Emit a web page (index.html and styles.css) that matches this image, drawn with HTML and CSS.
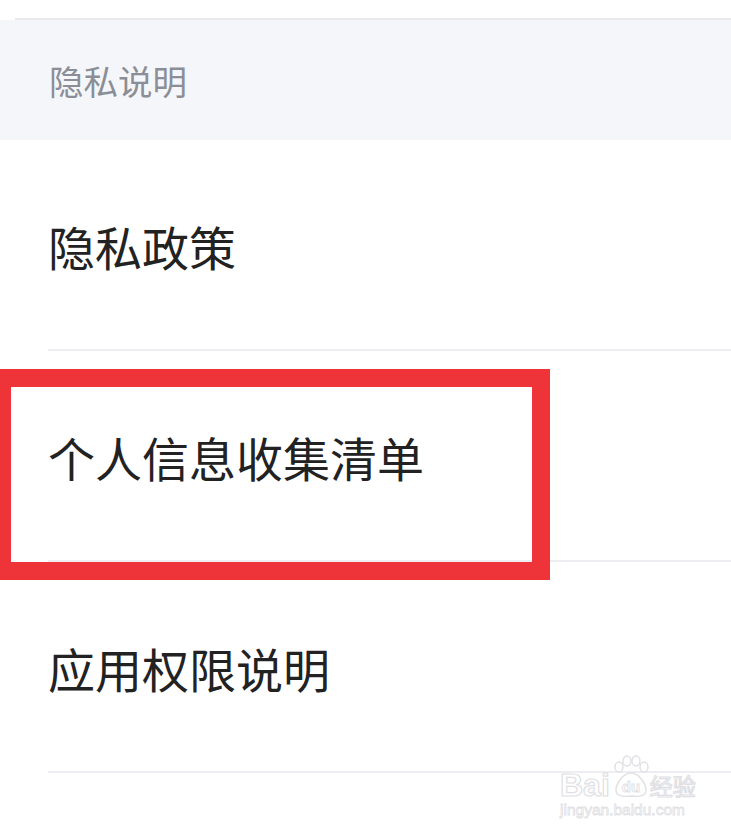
FILE: index.html
```html
<!DOCTYPE html>
<html lang="zh-CN">
<head>
    <meta charset="UTF-8">
    <meta name="viewport" content="width=device-width, initial-scale=1.0">
    <title>隐私说明</title>
    <link rel="stylesheet" href="styles.css">
</head>
<body>
    <div class="page">
        <div class="top-strip"></div>
        <div class="section-title">隐私说明</div>

        <ul class="menu">
            <li class="menu-item">隐私政策</li>
            <li class="menu-item">个人信息收集清单</li>
            <li class="menu-item">应用权限说明</li>
        </ul>

        <div class="highlight"></div>

        <div class="watermark">
            <div class="wm-logo">
                <span class="wm-bai">Bai</span>
                <svg class="wm-paw" width="46" height="46" viewBox="0 0 46 46">
                    <g fill="#fff" stroke="#e0e0e4" stroke-width="1.4">
                        <ellipse cx="11" cy="13" rx="4" ry="5"/>
                        <ellipse cx="19" cy="7" rx="4" ry="5"/>
                        <ellipse cx="28" cy="7" rx="4" ry="5"/>
                        <ellipse cx="36" cy="13" rx="4" ry="5"/>
                        <path d="M23 19 C15 19 8 30 8 36 C8 42 14 43 23 42 C32 43 38 42 38 36 C38 30 31 19 23 19 Z"/>
                    </g>
                    <text x="23" y="38" text-anchor="middle" class="wm-du">du</text>
                </svg>
                <span class="wm-cn">经验</span>
            </div>
            <div class="wm-url">jingyan.baidu.com</div>
        </div>
    </div>
</body>
</html>
```

FILE: styles.css
```css
body {
    margin: 0;
    background-color: #fff;
    font-family: 'Noto Sans CJK SC', 'Noto Sans', sans-serif;
}

.page {
    position: relative;
    width: 731px;
    height: 835px;
    overflow: hidden;
}

.top-strip {
    height: 18px;
    margin-left: 15px;
    border-bottom: 2px solid #e9e9ec;
}

.section-title {
    height: 120px;
    display: flex;
    align-items: center;
    padding-left: 49px;
    background-color: #f5f6fa;
    color: #8b8e97;
    font-size: 34.5px;
}

.menu {
    list-style: none;
    margin: 0;
    padding: 0;
}

.menu-item {
    position: relative;
    height: 210px;
    display: flex;
    align-items: center;
    padding-left: 48px;
    color: #222;
    font-size: 47px;
    border-bottom: 1px solid transparent;
}

.menu-item::after {
    content: "";
    position: absolute;
    left: 48px;
    right: 0;
    bottom: -1px;
    height: 2px;
    background-color: #eeeef2;
}

.highlight {
    position: absolute;
    left: -7px;
    top: 369px;
    width: 521px;
    height: 175px;
    border: 18px solid #ee3439;
}

.watermark {
    position: absolute;
    left: 560px;
    top: 752px;
    width: 150px;
    white-space: nowrap;
}

.wm-logo {
    display: flex;
    align-items: flex-end;
    height: 48px;
}

.wm-logo > * {
    flex-shrink: 0;
}

.wm-bai,
.wm-cn {
    color: #fff;
    -webkit-text-stroke: 1.2px #e0e0e4;
    font-family: 'Liberation Sans', sans-serif;
    font-weight: bold;
    font-size: 32px;
    line-height: 30px;
}

.wm-cn {
    font-family: 'Noto Sans CJK SC', sans-serif;
    font-weight: normal;
    font-size: 23px;
    line-height: 30px;
    margin-left: -4px;
}

.wm-paw {
    display: block;
    margin-left: -2px;
}

.wm-du {
    font-family: 'Liberation Sans', sans-serif;
    font-size: 15px;
    font-weight: bold;
    fill: #fff;
    stroke: #e0e0e4;
    stroke-width: 0.9;
}

.wm-url {
    color: #fff;
    -webkit-text-stroke: 0.8px #e0e0e4;
    font-family: 'Liberation Sans', sans-serif;
    font-size: 15.5px;
    line-height: 16px;
    margin-top: 2px;
}
```
